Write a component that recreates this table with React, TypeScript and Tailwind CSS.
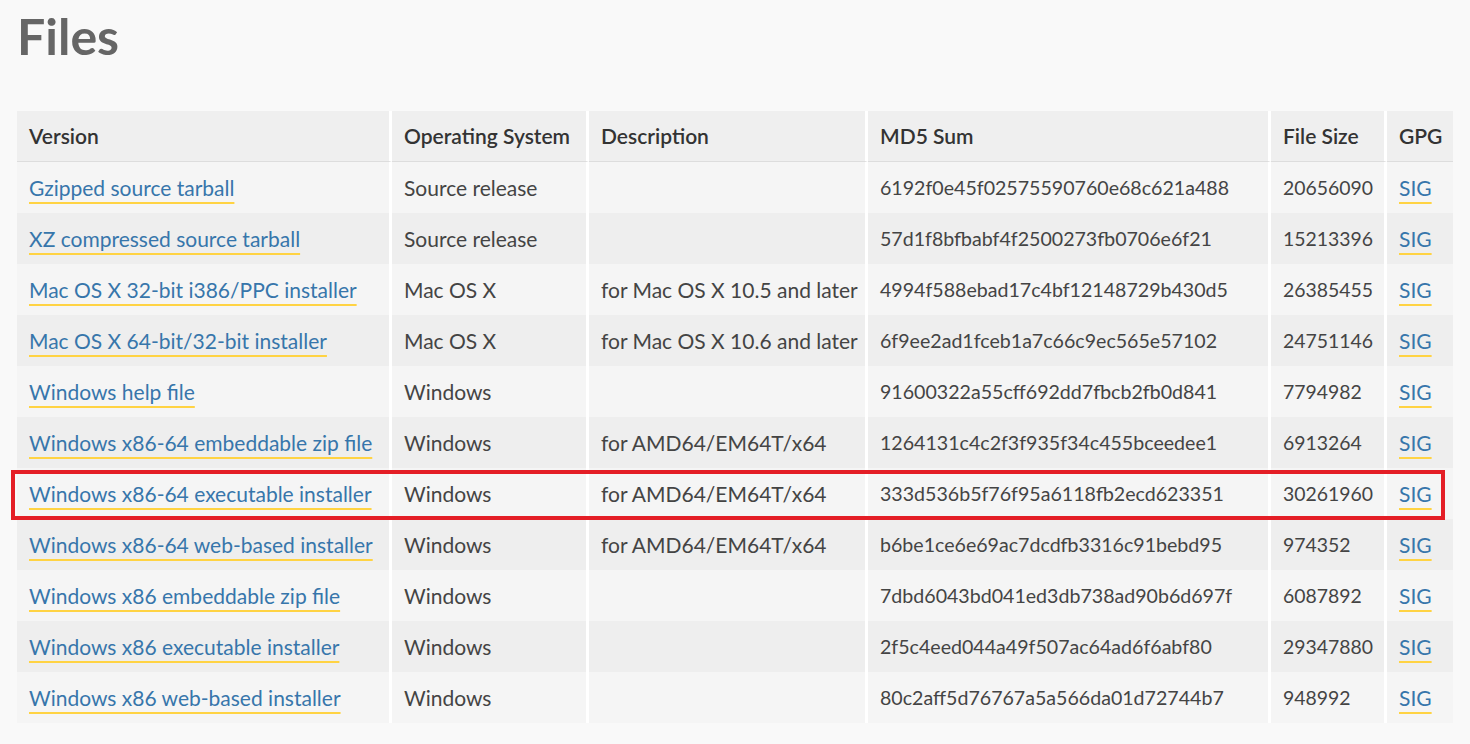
const files = [
  { name: 'Gzipped source tarball', os: 'Source release', desc: '', md5: '6192f0e45f02575590760e68c621a488', size: '20656090' },
  { name: 'XZ compressed source tarball', os: 'Source release', desc: '', md5: '57d1f8bfbabf4f2500273fb0706e6f21', size: '15213396' },
  { name: 'Mac OS X 32-bit i386/PPC installer', os: 'Mac OS X', desc: 'for Mac OS X 10.5 and later', md5: '4994f588ebad17c4bf12148729b430d5', size: '26385455' },
  { name: 'Mac OS X 64-bit/32-bit installer', os: 'Mac OS X', desc: 'for Mac OS X 10.6 and later', md5: '6f9ee2ad1fceb1a7c66c9ec565e57102', size: '24751146' },
  { name: 'Windows help file', os: 'Windows', desc: '', md5: '91600322a55cff692dd7fbcb2fb0d841', size: '7794982' },
  { name: 'Windows x86-64 embeddable zip file', os: 'Windows', desc: 'for AMD64/EM64T/x64', md5: '1264131c4c2f3f935f34c455bceedee1', size: '6913264' },
  { name: 'Windows x86-64 executable installer', os: 'Windows', desc: 'for AMD64/EM64T/x64', md5: '333d536b5f76f95a6118fb2ecd623351', size: '30261960' },
  { name: 'Windows x86-64 web-based installer', os: 'Windows', desc: 'for AMD64/EM64T/x64', md5: 'b6be1ce6e69ac7dcdfb3316c91bebd95', size: '974352' },
  { name: 'Windows x86 embeddable zip file', os: 'Windows', desc: '', md5: '7dbd6043bd041ed3db738ad90b6d697f', size: '6087892' },
  { name: 'Windows x86 executable installer', os: 'Windows', desc: '', md5: '2f5c4eed044a49f507ac64ad6f6abf80', size: '29347880' },
  { name: 'Windows x86 web-based installer', os: 'Windows', desc: '', md5: '80c2aff5d76767a5a566da01d72744b7', size: '948992' },
];

const headers = ['Version', 'Operating System', 'Description', 'MD5 Sum', 'File Size', 'GPG'];

function Link({ children }: { children: React.ReactNode }) {
  return (
    <a href="#" className="text-[#3776ab] underline decoration-[#ffd343] decoration-2 underline-offset-[6px]">
      {children}
    </a>
  );
}

export default function App() {
  const cell = 'h-[51px] px-3 border-r-[3px] border-white align-middle whitespace-nowrap';
  const lastCell = 'h-[51px] px-3 align-middle whitespace-nowrap';

  return (
    <div className="min-h-screen bg-[#f9f9f9] px-[17px] pt-[6px] font-['Lato','Noto_Sans',sans-serif] text-[#444]">
      <h1 className="text-[50px] font-bold leading-[60px] text-[#666]">Files</h1>

      <div className="relative mt-[45px] w-[1436px]">
        <table className="w-[1436px] table-fixed border-separate border-spacing-0 text-[21px]">
          <colgroup>
            <col className="w-[375px]" />
            <col className="w-[197px]" />
            <col className="w-[279px]" />
            <col className="w-[403px]" />
            <col className="w-[116px]" />
            <col className="w-[66px]" />
          </colgroup>
          <thead>
            <tr className="bg-[#efefef] text-left text-[#333]">
              {headers.map((h, i) => (
                <th
                  key={h}
                  className={
                    (i === headers.length - 1 ? lastCell : cell) +
                    ' h-[51px] border-b border-b-[#dddddd] font-semibold'
                  }
                >
                  {h}
                </th>
              ))}
            </tr>
          </thead>
          <tbody>
            {files.map((f, i) => (
              <tr key={f.name} className={i % 2 === 0 ? 'bg-[#f5f5f5]' : 'bg-[#eeeeee]'}>
                <td className={cell}>
                  <Link>{f.name}</Link>
                </td>
                <td className={cell}>{f.os}</td>
                <td className={cell}>{f.desc}</td>
                <td className={cell + ' text-[19.6px]'}>{f.md5}</td>
                <td className={cell + ' text-[19.4px]'}>{f.size}</td>
                <td className={lastCell}>
                  <Link>SIG</Link>
                </td>
              </tr>
            ))}
          </tbody>
        </table>

        {/* highlight around the 64-bit executable installer row */}
        <div className="pointer-events-none absolute left-[-6px] top-[359px] h-[50px] w-[1434px] border-[4px] border-[#e41e26]" />
      </div>
    </div>
  );
}
